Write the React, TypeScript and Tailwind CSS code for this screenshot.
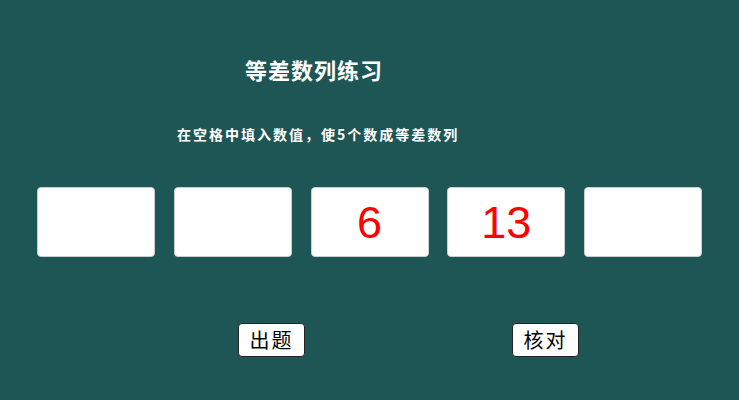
import React from "react";

const cjk = { fontFamily: '"Noto Sans CJK SC", "Noto Sans", sans-serif' };

function Box({ value }: { value?: string }) {
  return (
    <div
      className="w-[118px] h-[70px] bg-white rounded-[4px] border border-[#c8d0d0] flex items-center justify-center text-[#ff0000] text-[45px] leading-none"
      style={{ fontFamily: '"Liberation Sans", Arial, sans-serif' }}
    >
      {value}
    </div>
  );
}

export default function App() {
  return (
    <div className="w-[739px] h-[400px] bg-[#1e5656] flex flex-col overflow-hidden" style={cjk}>
      <div className="mt-[56px] ml-[245px] h-[26px] leading-[26px] text-[22px] font-bold tracking-[1px] text-white whitespace-nowrap">
        等差数列练习
      </div>
      <div className="mt-[42px] ml-[177px] h-[20px] leading-[20px] text-[14px] font-bold tracking-[2px] text-white whitespace-nowrap">
        在空格中填入数值，使5个数成等差数列
      </div>
      <div className="mt-[43px] ml-[37px] flex gap-[18.75px]">
        <Box />
        <Box />
        <Box value="6" />
        <Box value="13" />
        <Box />
      </div>
      <div className="mt-[66px] ml-[238px] flex gap-[207px]">
        <button className="w-[67px] h-[34px] bg-white border border-[#222] rounded-[4px] text-black text-[20px] leading-none tracking-[2px] flex items-center justify-center">
          出题
        </button>
        <button className="w-[67px] h-[34px] bg-white border border-[#222] rounded-[4px] text-black text-[20px] leading-none tracking-[2px] flex items-center justify-center">
          核对
        </button>
      </div>
    </div>
  );
}
